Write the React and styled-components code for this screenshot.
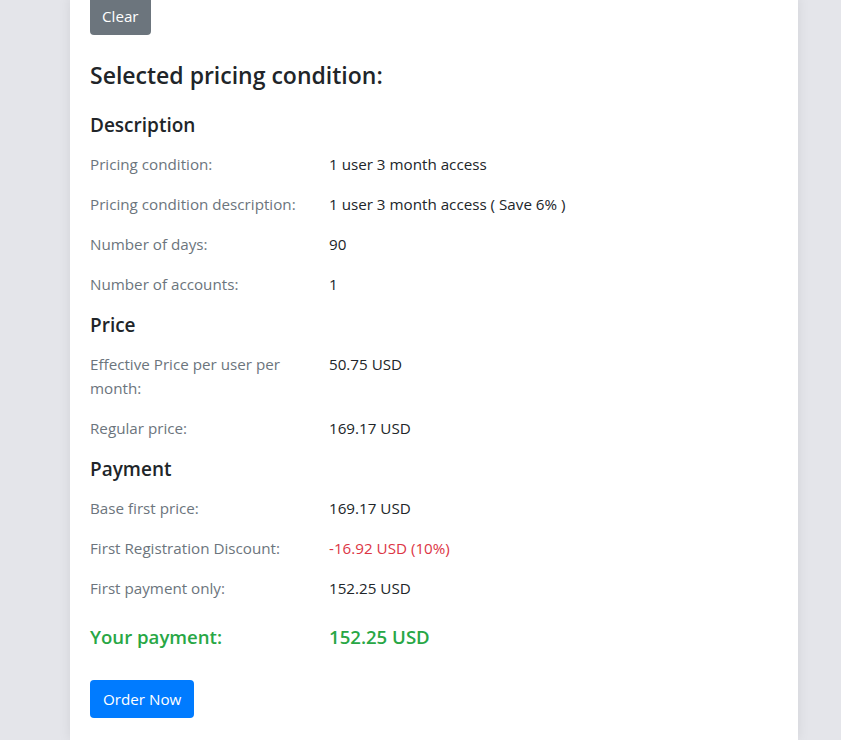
import React from 'react';
import styled, { createGlobalStyle } from 'styled-components';

const GlobalStyle = createGlobalStyle`
  html, body {
    margin: 0;
    padding: 0;
    background: #e4e5ea;
    font-family: 'Open Sans', 'Noto Sans', Arial, sans-serif;
    color: #212529;
    font-size: 15.2px;
    line-height: 24px;
  }
`;

const Page = styled.div`
  display: flex;
  justify-content: flex-start;
  padding-left: 70px;
  height: 740px;
  overflow: hidden;
`;

const Card = styled.section`
  width: 688px;
  margin-top: -3px;
  padding: 0 20px 40px;
  background: #fff;
  box-shadow: 0 0 12px rgba(0, 0, 0, 0.08);
`;

const Button = styled.button`
  display: inline-block;
  font-family: inherit;
  font-size: 15.2px;
  line-height: 24px;
  padding: 7px ${p => (p.variant === 'primary' ? '13px' : '12px')};
  border: none;
  border-radius: 4px;
  color: #fff;
  background: ${p => (p.variant === 'primary' ? '#007bff' : '#6c757d')};
  cursor: pointer;
`;

const Title = styled.h4`
  margin: 26px 0 23px;
  font-size: 23px;
  line-height: 29px;
  font-weight: 600;
  color: #212529;
`;

const Section = styled.div`
  & + & {
    padding-top: 1px;
  }
`;

const SectionTitle = styled.h5`
  margin: 0 0 15px;
  font-size: 19px;
  line-height: 24px;
  font-weight: 600;
  color: #212529;
`;

const Row = styled.div`
  display: grid;
  grid-template-columns: 209px 1fr;
  column-gap: 30px;
  margin-bottom: 16px;
`;

const Label = styled.div`
  color: #6c757d;
`;

const Value = styled.div`
  color: ${p => p.color || '#212529'};
`;

const TotalRow = styled.div`
  display: grid;
  grid-template-columns: 209px 1fr;
  column-gap: 30px;
  margin: 25px 0 31px;
  font-size: 18.6px;
  line-height: 24px;
  font-weight: 600;
  color: #28a745;
`;

const sections = [
  {
    title: 'Description',
    rows: [
      ['Pricing condition:', '1 user 3 month access'],
      ['Pricing condition description:', '1 user 3 month access ( Save 6% )'],
      ['Number of days:', '90'],
      ['Number of accounts:', '1'],
    ],
  },
  {
    title: 'Price',
    rows: [
      ['Effective Price per user per month:', '50.75 USD'],
      ['Regular price:', '169.17 USD'],
    ],
  },
  {
    title: 'Payment',
    rows: [
      ['Base first price:', '169.17 USD'],
      ['First Registration Discount:', '-16.92 USD (10%)', '#dc3545'],
      ['First payment only:', '152.25 USD'],
    ],
  },
];

export default function App() {
  return (
    <>
      <GlobalStyle />
      <Page>
        <Card>
          <Button>Clear</Button>
          <Title>Selected pricing condition:</Title>
          {sections.map(section => (
            <Section key={section.title}>
              <SectionTitle>{section.title}</SectionTitle>
              {section.rows.map(([label, value, color]) => (
                <Row key={label}>
                  <Label>{label}</Label>
                  <Value color={color}>{value}</Value>
                </Row>
              ))}
            </Section>
          ))}
          <TotalRow>
            <div>Your payment:</div>
            <div>152.25 USD</div>
          </TotalRow>
          <Button variant="primary">Order Now</Button>
        </Card>
      </Page>
    </>
  );
}
